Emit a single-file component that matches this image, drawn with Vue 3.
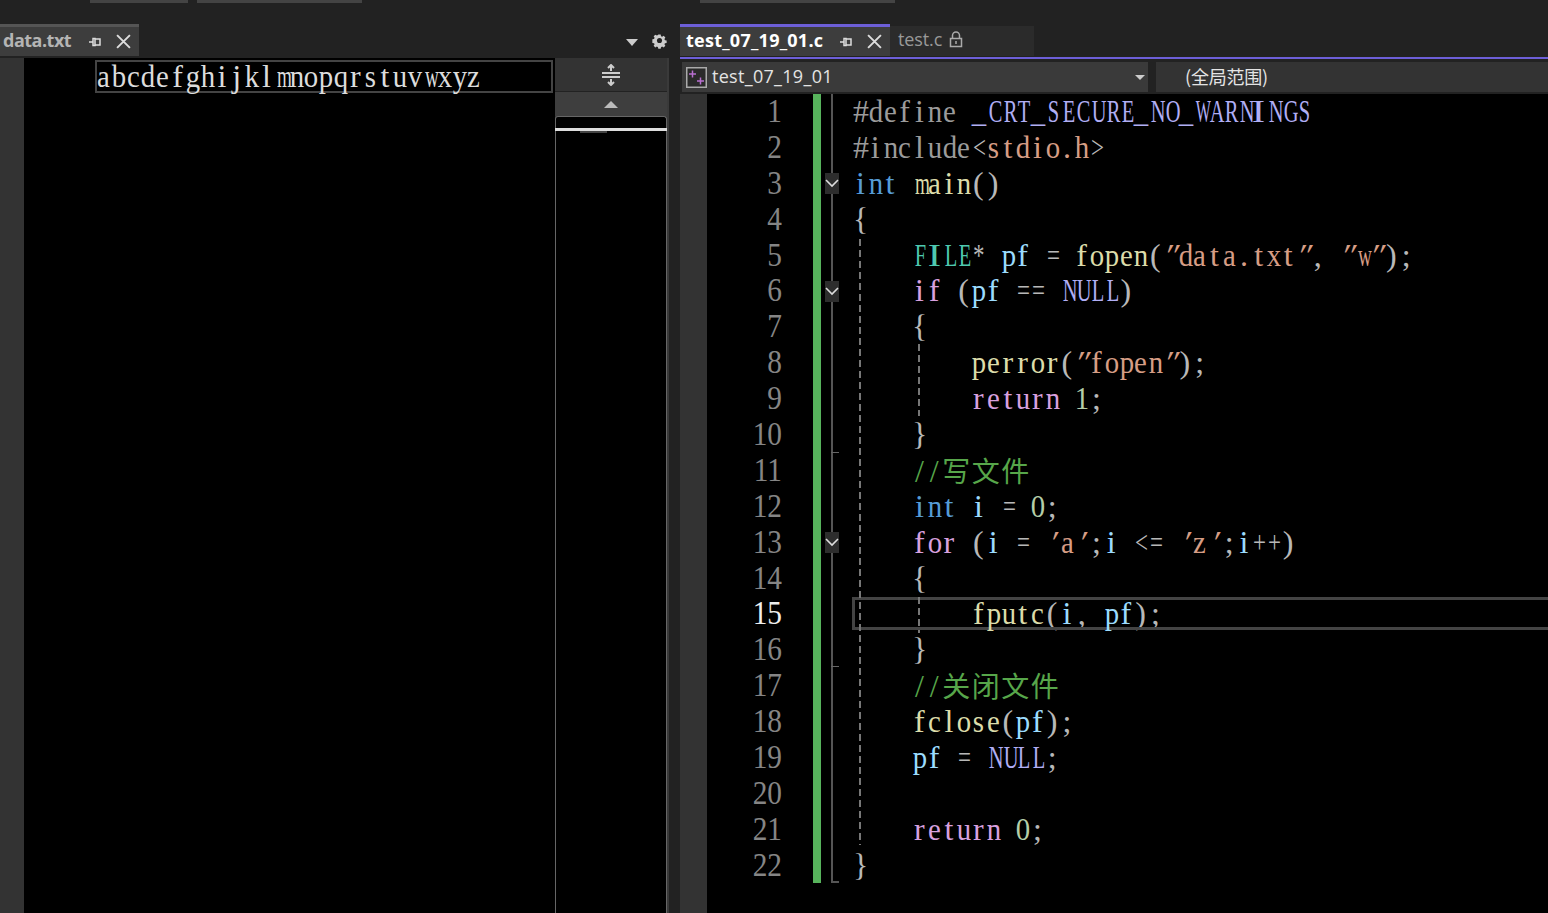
<template>
  <div class="ide">
    <div class="top-strip">
      <i class="stub s1"></i>
      <i class="stub s2"></i>
      <i class="stub s3"></i>
    </div>

    <div class="panes">
      <!-- left document: data.txt -->
      <section class="pane left">
        <div class="tabs">
          <div class="tab active-gray">
            <span class="tab-name">data.txt</span>
            <svg class="pin" viewBox="0 0 14 14"><path d="M1 7h4M5 3.5h2v7H5zM7 4h5v6H7z" fill="none" stroke="#ddd" stroke-width="1.5" /></svg>
            <svg class="close" viewBox="0 0 14 14"><path d="M1 1l12 12M13 1L1 13" stroke="#ddd" stroke-width="1.8" /></svg>
          </div>
          <div class="tab-tools">
            <span class="caret"></span>
            <svg class="gear" viewBox="0 0 16 16">
              <path d="M6.6 1h2.8l.4 2 1.3.6 1.8-1.1 2 2-1.1 1.8.6 1.3 2 .4v2.8l-2 .4-.6 1.3 1.1 1.8-2 2-1.8-1.1-1.3.6-.4 2H6.6l-.4-2-1.3-.6-1.8 1.1-2-2 1.1-1.8-.6-1.3-2-.4V6.6l2-.4.6-1.3L1.1 3.1l2-2 1.8 1.1 1.3-.6z" transform="translate(1.6 1.6) scale(.8)" fill="#ccc" />
              <circle cx="8" cy="8" r="2.4" fill="#222" />
            </svg>
          </div>
        </div>
        <div class="left-body">
          <div class="gutter-strip"></div>
          <div class="text-view">
            <div class="text-line">
              <div class="text-run">
                <span v-for="(c, i) in cells('abcdefghijklmnopqrstuvwxyz')" :key="i" class="ch" :style="c.style">{{ c.text }}</span>
              </div>
            </div>
          </div>
          <div class="map-col">
            <div class="split-btn">
              <svg width="18" height="22" viewBox="0 0 18 22"><path d="M0 9h18M0 13h18M9 1v6M9 15v6M6 4l3-3 3 3M6 18l3 3 3-3" fill="none" stroke="#ccc" stroke-width="2" /></svg>
            </div>
            <div class="scroll-up"><span class="up-arrow"></span></div>
            <div class="map">
              <div class="map-thumb"></div>
              <div class="map-text"></div>
            </div>
          </div>
          <div class="pane-edge"></div>
        </div>
      </section>

      <!-- right document: test_07_19_01.c -->
      <section class="pane right">
        <div class="tabs">
          <div class="tab active-purple">
            <span class="tab-name white">test_07_19_01.c</span>
            <svg class="pin" viewBox="0 0 14 14"><path d="M1 7h4M5 3.5h2v7H5zM7 4h5v6H7z" fill="none" stroke="#ddd" stroke-width="1.5" /></svg>
            <svg class="close" viewBox="0 0 14 14"><path d="M1 1l12 12M13 1L1 13" stroke="#ddd" stroke-width="1.8" /></svg>
          </div>
          <div class="tab idle">
            <span class="tab-idle-name">test.c</span>
            <svg class="lock" viewBox="0 0 14 17"><path d="M3.5 7V4.5a3.5 3.5 0 0 1 7 0V7M1.5 7.5h11v8h-11zM7 10v3" fill="none" stroke="#aaa" stroke-width="1.5" /></svg>
          </div>
        </div>
        <div class="accent"></div>
        <div class="nav">
          <div class="combo first">
            <svg class="class-icon" viewBox="0 0 21 21">
              <rect x=".75" y=".75" width="19.5" height="19.5" fill="#2a2a2a" stroke="#aaa" stroke-width="1.5" />
              <path d="M3 7h7M6.5 3.5v7" stroke="#b86fd0" stroke-width="1.5" />
              <path d="M11 14h7M14.5 10.5v7" stroke="#b86fd0" stroke-width="1.5" />
            </svg>
            <span class="combo-text">test_07_19_01</span>
            <span class="caret small"></span>
          </div>
          <div class="combo second"><span>(全局范围)</span></div>
        </div>
        <div class="editor">
          <div class="gutter-strip narrow"></div>
          <div class="numbers">
            <div v-for="(l, i) in code" :key="i" class="num" :class="{ current: i === 14 }">{{ i + 1 }}</div>
          </div>
          <div class="change-bar"></div>
          <div class="folds">
            <div class="fold-line"></div>
            <div class="fold-end"></div>
            <div class="fold-tick t1"></div>
            <div class="fold-tick t2"></div>
            <div v-for="n in [2, 5, 12]" :key="n" class="fold-box" :style="{ top: n * lineH + 7 + 'px' }">
              <svg width="14" height="9" viewBox="0 0 14 9"><path d="M1 1l6 6 6-6" fill="none" stroke="#ddd" stroke-width="1.6" /></svg>
            </div>
          </div>
          <div class="code">
            <div class="current-line"></div>
            <div class="guide g1"></div>
            <div class="guide g2"></div>
            <div class="guide g3"></div>
            <div v-for="(line, i) in code" :key="i" class="code-line">
              <span v-for="(tok, j) in line" :key="j" :class="tok[1]"><span v-for="(c, k) in cells(tok[0])" :key="k" class="ch" :class="{ cjk: c.cjk }" :style="c.style">{{ c.text }}</span></span>
            </div>
          </div>
        </div>
      </section>
    </div>
  </div>
</template>

<script setup>
const lineH = 35.9

// the editor font is a fixed grid, so every glyph sits in its own cell
const cells = (text) =>
  [...text].map((ch) => {
    if (/[\u4e00-\u9fff]/.test(ch)) return { text: ch, cjk: true }
    let t = ''
    if (/[WM]/.test(ch)) t = 'scaleX(0.5)'
    else if (/[mw]/.test(ch)) t = 'scaleX(0.6)'
    else if (ch === 'I') t = 'scaleX(1.25)'
    else if (/[A-HK-Z]/.test(ch)) t = 'scaleX(0.64)'
    else if (/[a-z0-9_]/.test(ch) && !/[iljtfr]/.test(ch)) t = 'scaleX(0.9)'
    else if (/[=<>+*]/.test(ch)) t = 'scaleX(0.72)'
    else if (/["']/.test(ch)) t = 'skewX(-24deg) scaleX(1.1)'
    return { text: ch, style: t ? { transform: t } : undefined }
  })

const code = [
  [['#define ', 'pre'], ['_CRT_SECURE_NO_WARNINGS', 'macro']],
  [['#include', 'pre'], ['<', 'plain'], ['stdio.h', 'str'], ['>', 'plain']],
  [['int', 'kw'], [' ', 'plain'], ['main', 'fn'], ['()', 'plain']],
  [['{', 'plain']],
  [['    ', 'plain'], ['FILE', 'type'], ['* ', 'plain'], ['pf', 'var'], [' = ', 'plain'], ['fopen', 'fn'], ['(', 'plain'], ['"data.txt"', 'str'], [', ', 'plain'], ['"w"', 'str'], [');', 'plain']],
  [['    ', 'plain'], ['if', 'ctl'], [' (', 'plain'], ['pf', 'var'], [' == ', 'plain'], ['NULL', 'macro'], [')', 'plain']],
  [['    {', 'plain']],
  [['        ', 'plain'], ['perror', 'fn'], ['(', 'plain'], ['"fopen"', 'str'], [');', 'plain']],
  [['        ', 'plain'], ['return', 'ctl'], [' ', 'plain'], ['1', 'nr'], [';', 'plain']],
  [['    }', 'plain']],
  [['    ', 'plain'], ['//写文件', 'cmt']],
  [['    ', 'plain'], ['int', 'kw'], [' ', 'plain'], ['i', 'var'], [' = ', 'plain'], ['0', 'nr'], [';', 'plain']],
  [['    ', 'plain'], ['for', 'ctl'], [' (', 'plain'], ['i', 'var'], [' = ', 'plain'], ["'a'", 'str'], [';', 'plain'], ['i', 'var'], [' <= ', 'plain'], ["'z'", 'str'], [';', 'plain'], ['i', 'var'], ['++)', 'plain']],
  [['    {', 'plain']],
  [['        ', 'plain'], ['fputc', 'fn'], ['(', 'plain'], ['i', 'var'], [', ', 'plain'], ['pf', 'var'], [');', 'plain']],
  [['    }', 'plain']],
  [['    ', 'plain'], ['//关闭文件', 'cmt']],
  [['    ', 'plain'], ['fclose', 'fn'], ['(', 'plain'], ['pf', 'var'], [');', 'plain']],
  [['    ', 'plain'], ['pf', 'var'], [' = ', 'plain'], ['NULL', 'macro'], [';', 'plain']],
  [[' ', 'plain']],
  [['    ', 'plain'], ['return', 'ctl'], [' ', 'plain'], ['0', 'nr'], [';', 'plain']],
  [['}', 'plain']],
]
</script>

<style scoped>
.ide {
  height: 913px;
  overflow: hidden;
  background: #222;
  display: flex;
  flex-direction: column;
  font-family: "Open Sans", "Noto Sans CJK SC", sans-serif;
}

.top-strip {
  height: 24px;
  display: flex;
  align-items: flex-start;
}

.stub {
  display: block;
  height: 3px;
  background: #444;
}

.s1 {
  width: 98px;
  margin-left: 90px;
}

.s2 {
  width: 165px;
  margin-left: 9px;
}

.s3 {
  width: 195px;
  margin-left: 338px;
}

.panes {
  flex: 1;
  display: flex;
  min-height: 0;
}

.pane {
  display: flex;
  flex-direction: column;
}

.left {
  width: 680px;
}

.right {
  width: 868px;
}

.tabs {
  height: 32px;
  display: flex;
}

.tab {
  display: flex;
  align-items: center;
  height: 32px;
}

.active-gray {
  width: 139px;
  background: #3d3d3d;
  border-top: 3px solid #555;
  box-sizing: border-box;
  padding-left: 3px;
}

.active-purple {
  width: 210px;
  background: #3d3d3d;
  border-top: 3px solid #6d5fd8;
  box-sizing: border-box;
  padding-left: 6px;
}

.tab-name {
  font-family: "Open Sans", sans-serif;
  font-weight: 700;
  font-size: 18px;
  letter-spacing: -0.5px;
  color: #b4b4b4;
  margin-top: -3px;
}

.tab-name.white {
  color: #fff;
  letter-spacing: 0.25px;
}

.pin {
  width: 14px;
  height: 14px;
  margin-left: 17px;
}

.active-purple .pin {
  margin-left: 16px;
}

.close {
  width: 15px;
  height: 15px;
  margin-left: 14px;
}

.idle {
  width: 144px;
  height: 30px;
  margin-top: 2px;
  background: #2b2b2b;
  padding: 0 0 2px 8px;
  box-sizing: border-box;
  gap: 7px;
}

.tab-idle-name {
  font-size: 18px;
  color: #999;
  letter-spacing: -0.1px;
  margin-top: -2px;
}

.lock {
  width: 14px;
  height: 17px;
  margin-top: -1px;
}

.tab-tools {
  margin-left: 487px;
  width: 44px;
  display: flex;
  align-items: center;
  gap: 13px;
}

.caret {
  width: 0;
  height: 0;
  margin-top: 4px;
  border-left: 6px solid transparent;
  border-right: 6px solid transparent;
  border-top: 7px solid #ccc;
}

.caret.small {
  margin: 0 0 0 auto;
  border-left-width: 5px;
  border-right-width: 5px;
  border-top-width: 5px;
}

.gear {
  width: 17px;
  height: 17px;
}

.left-body {
  flex: 1;
  margin-top: 2px;
  display: flex;
  min-height: 0;
}

.gutter-strip {
  width: 24px;
  flex: none;
  background: #333;
}

.gutter-strip.narrow {
  width: 27px;
}

.text-view {
  width: 531px;
  flex: none;
  background: #000;
  padding: 2px 2px 0 71px;
  box-sizing: border-box;
}

.text-line {
  height: 33px;
  box-sizing: border-box;
  border: 2px solid #444;
  color: #dcdcdc;
  line-height: 29px;
  white-space: nowrap;
  font-family: "Liberation Serif", serif;
  font-size: 32px;
}

.text-run {
  margin-left: -1px;
}

.text-run .ch {
  width: 14.82px;
}

.map-col {
  width: 112px;
  flex: none;
  display: flex;
  flex-direction: column;
  background: #333;
}

.split-btn {
  height: 33px;
  display: flex;
  align-items: center;
  justify-content: center;
  background: #333;
  border-bottom: 1px solid #222;
}

.scroll-up {
  height: 24px;
  background: #3e3e3e;
  display: flex;
  align-items: center;
  justify-content: center;
}

.up-arrow {
  width: 0;
  height: 0;
  border-left: 7px solid transparent;
  border-right: 7px solid transparent;
  border-bottom: 7px solid #bbb;
}

.map {
  flex: 1;
  position: relative;
  background: #000;
  border: 1px solid #666;
  border-bottom: 0;
  border-radius: 3px 3px 0 0;
}

.map-thumb {
  position: absolute;
  top: 11px;
  left: -1px;
  right: -1px;
  height: 3px;
  background: #ddd;
}

.map-text {
  position: absolute;
  top: 14px;
  left: 24px;
  width: 27px;
  height: 2px;
  background: #444;
}

.pane-edge {
  flex: 1;
  background: #222;
  border-left: 2px solid #3a3a3a;
}

.accent {
  height: 2px;
  margin-top: 1px;
  background: #6d5fd8;
}

.nav {
  height: 35px;
  display: flex;
  gap: 8px;
  padding: 3px 0 2px 2px;
  box-sizing: border-box;
}

.combo {
  height: 30px;
  background: #3a3a3a;
  display: flex;
  align-items: center;
  color: #e4e4e4;
  font-size: 18px;
}

.first {
  width: 466px;
  padding: 0 3px 0 4px;
  box-sizing: border-box;
}

.second {
  flex: 1;
  background: #333;
  padding: 0 0 2px 29px;
  box-sizing: border-box;
  letter-spacing: -0.2px;
  font-family: "Noto Sans CJK SC", sans-serif;
}

.class-icon {
  width: 21px;
  height: 21px;
  margin-right: 5px;
}

.combo-text {
  letter-spacing: 0.3px;
  margin-top: -2px;
}

.editor {
  flex: 1;
  display: flex;
  background: #000;
  min-height: 0;
  font-family: "Liberation Serif", "Noto Sans CJK SC", serif;
}

.numbers {
  width: 75px;
  flex: none;
  text-align: right;
  color: #858585;
  font-size: 33px;
}

.num {
  height: 35.9px;
  line-height: 35px;
  transform: scaleX(0.89);
  transform-origin: right center;
}

.num.current {
  color: #eee;
}

.change-bar {
  width: 8px;
  flex: none;
  margin-left: 31px;
  height: 789px;
  background: #57b35c;
}

.folds {
  position: relative;
  width: 31px;
  flex: none;
}

.fold-line {
  position: absolute;
  left: 10px;
  top: 0;
  width: 2px;
  height: 789px;
  background: #555;
}

.fold-end {
  position: absolute;
  left: 10px;
  top: 787px;
  width: 8px;
  height: 2px;
  background: #555;
}

.fold-tick {
  position: absolute;
  left: 10px;
  width: 8px;
  height: 1px;
  background: #666;
}

.t1 {
  top: 358px;
}

.t2 {
  top: 572px;
}

.fold-box {
  position: absolute;
  left: 4px;
  width: 14px;
  height: 21px;
  background: #2d2d2d;
  display: flex;
  align-items: center;
  justify-content: center;
}

.code {
  flex: 1;
  position: relative;
  min-width: 0;
  padding-left: 1px;
  font-size: 32px;
  color: #c8c8c8;
}

.code-line {
  height: 35.9px;
  line-height: 35px;
  white-space: nowrap;
}

.ch {
  display: inline-block;
  width: 14.76px;
  text-align: center;
  white-space: pre;
}

.ch.cjk {
  width: 29.52px;
  font-size: 28px;
  font-family: "Noto Sans CJK SC", sans-serif;
  font-weight: 400;
}

.current-line {
  position: absolute;
  left: 0;
  right: 0;
  top: 503px;
  height: 33px;
  box-sizing: border-box;
  border: 3px solid #444;
  border-right: 0;
}

.guide {
  position: absolute;
  width: 2px;
  background: repeating-linear-gradient(#777 0 7px, transparent 7px 11px);
}

.g1 {
  left: 7px;
  top: 145px;
  height: 606px;
}

.g2 {
  left: 66px;
  top: 250px;
  height: 72px;
}

.g3 {
  left: 66px;
  top: 503px;
  height: 36px;
}

.pre { color: #9b9b9b; }
.macro { color: #b0aef5; }
.plain { color: #b8b8b8; }
.str { color: #d69d85; }
.kw { color: #569cd6; }
.ctl { color: #d8a0df; }
.fn { color: #dcdcaa; }
.type { color: #4ec9b0; }
.var { color: #9cdcfe; }
.nr { color: #b5cea8; }
.cmt { color: #57a64a; }
</style>

<style>
body {
  background: #222;
}
</style>
